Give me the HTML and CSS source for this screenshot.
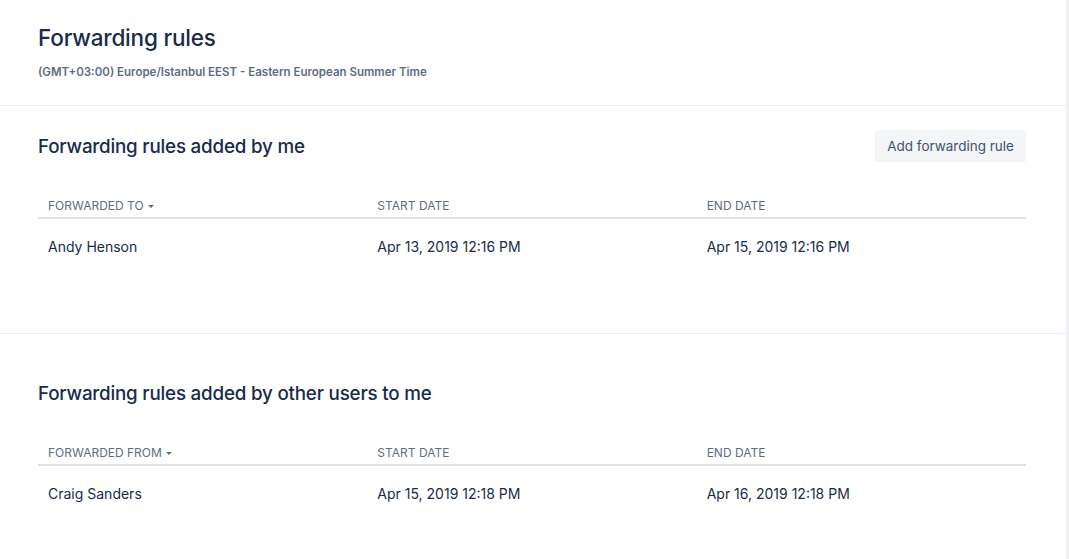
FILE: index.html
```html
<!DOCTYPE html>
<html lang="en">

<head>
    <meta charset="UTF-8">
    <meta name="viewport" content="width=device-width, initial-scale=1.0">
    <title>Forwarding rules</title>
    <link rel="stylesheet" href="styles.css">
</head>

<body>
    <div class="layout">
        <main class="page">
            <header class="page-header">
                <h1>Forwarding rules</h1>
                <p class="timezone">(GMT+03:00) Europe/Istanbul EEST - Eastern European Summer Time</p>
            </header>

            <section class="rules">
                <div class="toolbar">
                    <h2>Forwarding rules added by me</h2>
                    <button class="btn">Add forwarding rule</button>
                </div>
                <table>
                    <thead>
                        <tr>
                            <th>Forwarded to <span class="caret"></span></th>
                            <th>Start date</th>
                            <th>End date</th>
                        </tr>
                    </thead>
                    <tbody>
                        <tr>
                            <td>Andy Henson</td>
                            <td>Apr 13, 2019 12:16 PM</td>
                            <td>Apr 15, 2019 12:16 PM</td>
                        </tr>
                    </tbody>
                </table>
            </section>

            <section class="rules rules-other">
                <div class="toolbar">
                    <h2>Forwarding rules added by other users to me</h2>
                </div>
                <table>
                    <thead>
                        <tr>
                            <th>Forwarded from <span class="caret"></span></th>
                            <th>Start date</th>
                            <th>End date</th>
                        </tr>
                    </thead>
                    <tbody>
                        <tr>
                            <td>Craig Sanders</td>
                            <td>Apr 15, 2019 12:18 PM</td>
                            <td>Apr 16, 2019 12:18 PM</td>
                        </tr>
                    </tbody>
                </table>
            </section>
        </main>
        <div class="sidebar-edge"></div>
    </div>
</body>

</html>
```

FILE: styles.css
```css
body {
    margin: 0;
    font-family: 'Inter', 'Liberation Sans', sans-serif;
    color: #172b4d;
    background-color: #fff;
}

.layout {
    display: flex;
    min-height: 559px;
}

.page {
    flex: 1;
}

.sidebar-edge {
    width: 3px;
    background-color: #f0f0f4;
}

.page-header {
    padding: 24px 38px 25px;
    border-bottom: 1px solid #ebecf0;
}

h1 {
    margin: 0;
    font-size: 22.5px;
    line-height: 28px;
    font-weight: 500;
    letter-spacing: -0.2px;
}

.timezone {
    margin: 12px 0 0;
    font-size: 11.5px;
    line-height: 16px;
    font-weight: 600;
    color: #5e6c84;
}

.rules {
    padding: 24px 40px 58px 38px;
    border-bottom: 1px solid #ebecf0;
}

.rules-other {
    padding-top: 43px;
    border-bottom: none;
}

.toolbar {
    display: flex;
    justify-content: space-between;
    align-items: center;
    min-height: 32px;
}

h2 {
    margin: 0;
    padding-top: 1px;
    font-size: 18.8px;
    line-height: 24px;
    font-weight: 500;
    letter-spacing: -0.2px;
}

.btn {
    height: 32px;
    padding: 0 12px;
    border: none;
    border-radius: 3px;
    background-color: #f4f5f7;
    color: #42526e;
    font-family: inherit;
    font-size: 13.5px;
}

table {
    width: 100%;
    margin-top: 32px;
    border-collapse: collapse;
    table-layout: fixed;
}

th {
    padding: 4px 10px 3px;
    border-bottom: 2px solid #dfe1e6;
    text-align: left;
    font-size: 12px;
    line-height: 16px;
    font-weight: 400;
    text-transform: uppercase;
    color: #5e6c84;
}

td {
    padding: 18px 10px 18px;
    font-size: 14px;
    line-height: 20px;
}

.caret {
    display: inline-block;
    margin-left: 1px;
    vertical-align: middle;
    border-left: 3px solid transparent;
    border-right: 3px solid transparent;
    border-top: 3px solid #5e6c84;
}
```
